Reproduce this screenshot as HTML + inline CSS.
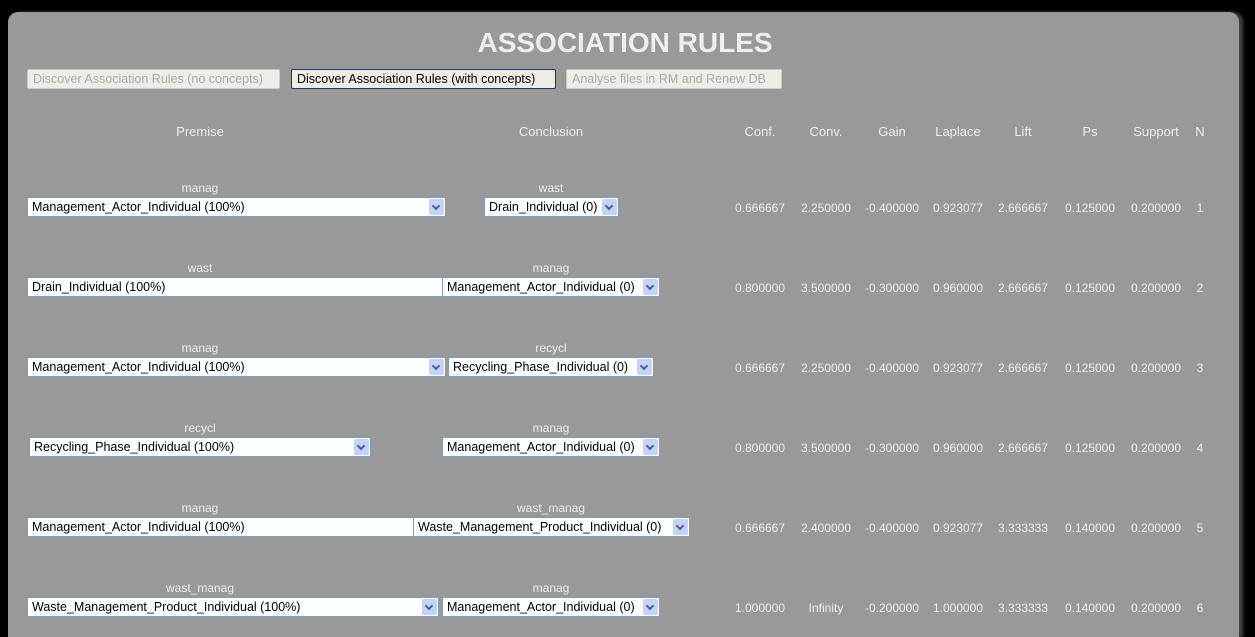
<!DOCTYPE html>
<html style="width:1255px;height:637px;overflow:hidden"><head><meta charset="utf-8"><style>
body{margin:0;width:1255px;height:637px;background:#000;overflow:hidden;font-family:"Liberation Sans",sans-serif;position:relative}
#p{position:absolute;left:8px;top:12px;width:1231px;height:625px;background:#999;border-radius:10px 10px 0 0;box-shadow:4px 0 3px #444}
.t{position:absolute;color:#eee;font-size:13px;white-space:nowrap}
.c{transform:translateX(-50%)}
.s{position:absolute;height:18px;background:#fff;border:1px solid #7f9db9;font-size:12.5px;line-height:18px;color:#000;padding-left:4px;box-sizing:content-box;white-space:nowrap;overflow:hidden}
.a{position:absolute;right:1px;top:1px;width:15px;height:16px;background:#c3d3fb;border-radius:2px}
.a:after{content:"";position:absolute;left:4px;top:4px;width:4px;height:4px;border-right:2px solid #4d6185;border-bottom:2px solid #4d6185;transform:rotate(45deg)}
.b{position:absolute;top:69px;height:18px;font-size:12.5px;line-height:18px;padding:0 5px;border:1px solid #ccc;border-radius:2px;background:#eeede5;color:#aaa;white-space:nowrap;overflow:hidden}
.d{position:absolute;color:#eee;font-size:12px;transform:translateX(-50%);white-space:nowrap}
</style></head><body>
<div id="p"></div>
<div class="t c" style="left:625px;top:27px;font-size:28px;font-weight:bold;color:#eee">ASSOCIATION RULES</div>
<div class="b" style="left:27px;width:241px">Discover Association Rules (no concepts)</div>
<div class="b" style="left:291px;width:253px;color:#000;border:1px solid #1c3a6e">Discover Association Rules (with concepts)</div>
<div class="b" style="left:566px;width:204px">Analyse files in RM and Renew DB</div>
<div class="t c" style="left:200px;top:124px">Premise</div>
<div class="t c" style="left:551px;top:124px">Conclusion</div>
<div class="t c" style="left:760px;top:124px">Conf.</div>
<div class="t c" style="left:826px;top:124px">Conv.</div>
<div class="t c" style="left:892px;top:124px">Gain</div>
<div class="t c" style="left:958px;top:124px">Laplace</div>
<div class="t c" style="left:1023px;top:124px">Lift</div>
<div class="t c" style="left:1090px;top:124px">Ps</div>
<div class="t c" style="left:1156px;top:124px">Support</div>
<div class="t c" style="left:1200px;top:124px">N</div>

<div class="t c" style="left:200px;top:181px;font-size:12px">manag</div>
<div class="t c" style="left:551px;top:181px;font-size:12px">wast</div>
<div class="s" style="left:27px;top:197px;width:413px">Management_Actor_Individual (100%)<span class="a"></span></div>
<div class="s" style="left:484px;top:197px;width:129px">Drain_Individual (0)<span class="a"></span></div>

<div class="t c" style="left:200px;top:261px;font-size:12px">wast</div>
<div class="t c" style="left:551px;top:261px;font-size:12px">manag</div>
<div class="s" style="left:27px;top:277px;width:410px">Drain_Individual (100%)</div>
<div class="s" style="left:442px;top:277px;width:212px">Management_Actor_Individual (0)<span class="a"></span></div>

<div class="t c" style="left:200px;top:341px;font-size:12px">manag</div>
<div class="t c" style="left:551px;top:341px;font-size:12px">recycl</div>
<div class="s" style="left:27px;top:357px;width:413px">Management_Actor_Individual (100%)<span class="a"></span></div>
<div class="s" style="left:448px;top:357px;width:200px">Recycling_Phase_Individual (0)<span class="a"></span></div>

<div class="t c" style="left:200px;top:421px;font-size:12px">recycl</div>
<div class="t c" style="left:551px;top:421px;font-size:12px">manag</div>
<div class="s" style="left:29px;top:437px;width:336px">Recycling_Phase_Individual (100%)<span class="a"></span></div>
<div class="s" style="left:442px;top:437px;width:212px">Management_Actor_Individual (0)<span class="a"></span></div>

<div class="t c" style="left:200px;top:501px;font-size:12px">manag</div>
<div class="t c" style="left:551px;top:501px;font-size:12px">wast_manag</div>
<div class="s" style="left:27px;top:517px;width:381px">Management_Actor_Individual (100%)</div>
<div class="s" style="left:413px;top:517px;width:271px">Waste_Management_Product_Individual (0)<span class="a"></span></div>

<div class="t c" style="left:200px;top:581px;font-size:12px">wast_manag</div>
<div class="t c" style="left:551px;top:581px;font-size:12px">manag</div>
<div class="s" style="left:27px;top:597px;width:406px">Waste_Management_Product_Individual (100%)<span class="a"></span></div>
<div class="s" style="left:442px;top:597px;width:212px">Management_Actor_Individual (0)<span class="a"></span></div>

<div class="d" style="left:760px;top:201px">0.666667</div><div class="d" style="left:826px;top:201px">2.250000</div><div class="d" style="left:892px;top:201px">-0.400000</div><div class="d" style="left:958px;top:201px">0.923077</div><div class="d" style="left:1023px;top:201px">2.666667</div><div class="d" style="left:1090px;top:201px">0.125000</div><div class="d" style="left:1156px;top:201px">0.200000</div><div class="d" style="left:1200px;top:201px">1</div>
<div class="d" style="left:760px;top:281px">0.800000</div><div class="d" style="left:826px;top:281px">3.500000</div><div class="d" style="left:892px;top:281px">-0.300000</div><div class="d" style="left:958px;top:281px">0.960000</div><div class="d" style="left:1023px;top:281px">2.666667</div><div class="d" style="left:1090px;top:281px">0.125000</div><div class="d" style="left:1156px;top:281px">0.200000</div><div class="d" style="left:1200px;top:281px">2</div>
<div class="d" style="left:760px;top:361px">0.666667</div><div class="d" style="left:826px;top:361px">2.250000</div><div class="d" style="left:892px;top:361px">-0.400000</div><div class="d" style="left:958px;top:361px">0.923077</div><div class="d" style="left:1023px;top:361px">2.666667</div><div class="d" style="left:1090px;top:361px">0.125000</div><div class="d" style="left:1156px;top:361px">0.200000</div><div class="d" style="left:1200px;top:361px">3</div>
<div class="d" style="left:760px;top:441px">0.800000</div><div class="d" style="left:826px;top:441px">3.500000</div><div class="d" style="left:892px;top:441px">-0.300000</div><div class="d" style="left:958px;top:441px">0.960000</div><div class="d" style="left:1023px;top:441px">2.666667</div><div class="d" style="left:1090px;top:441px">0.125000</div><div class="d" style="left:1156px;top:441px">0.200000</div><div class="d" style="left:1200px;top:441px">4</div>
<div class="d" style="left:760px;top:521px">0.666667</div><div class="d" style="left:826px;top:521px">2.400000</div><div class="d" style="left:892px;top:521px">-0.400000</div><div class="d" style="left:958px;top:521px">0.923077</div><div class="d" style="left:1023px;top:521px">3.333333</div><div class="d" style="left:1090px;top:521px">0.140000</div><div class="d" style="left:1156px;top:521px">0.200000</div><div class="d" style="left:1200px;top:521px">5</div>
<div class="d" style="left:760px;top:601px">1.000000</div><div class="d" style="left:826px;top:601px">Infinity</div><div class="d" style="left:892px;top:601px">-0.200000</div><div class="d" style="left:958px;top:601px">1.000000</div><div class="d" style="left:1023px;top:601px">3.333333</div><div class="d" style="left:1090px;top:601px">0.140000</div><div class="d" style="left:1156px;top:601px">0.200000</div><div class="d" style="left:1200px;top:601px">6</div>
</body></html>
